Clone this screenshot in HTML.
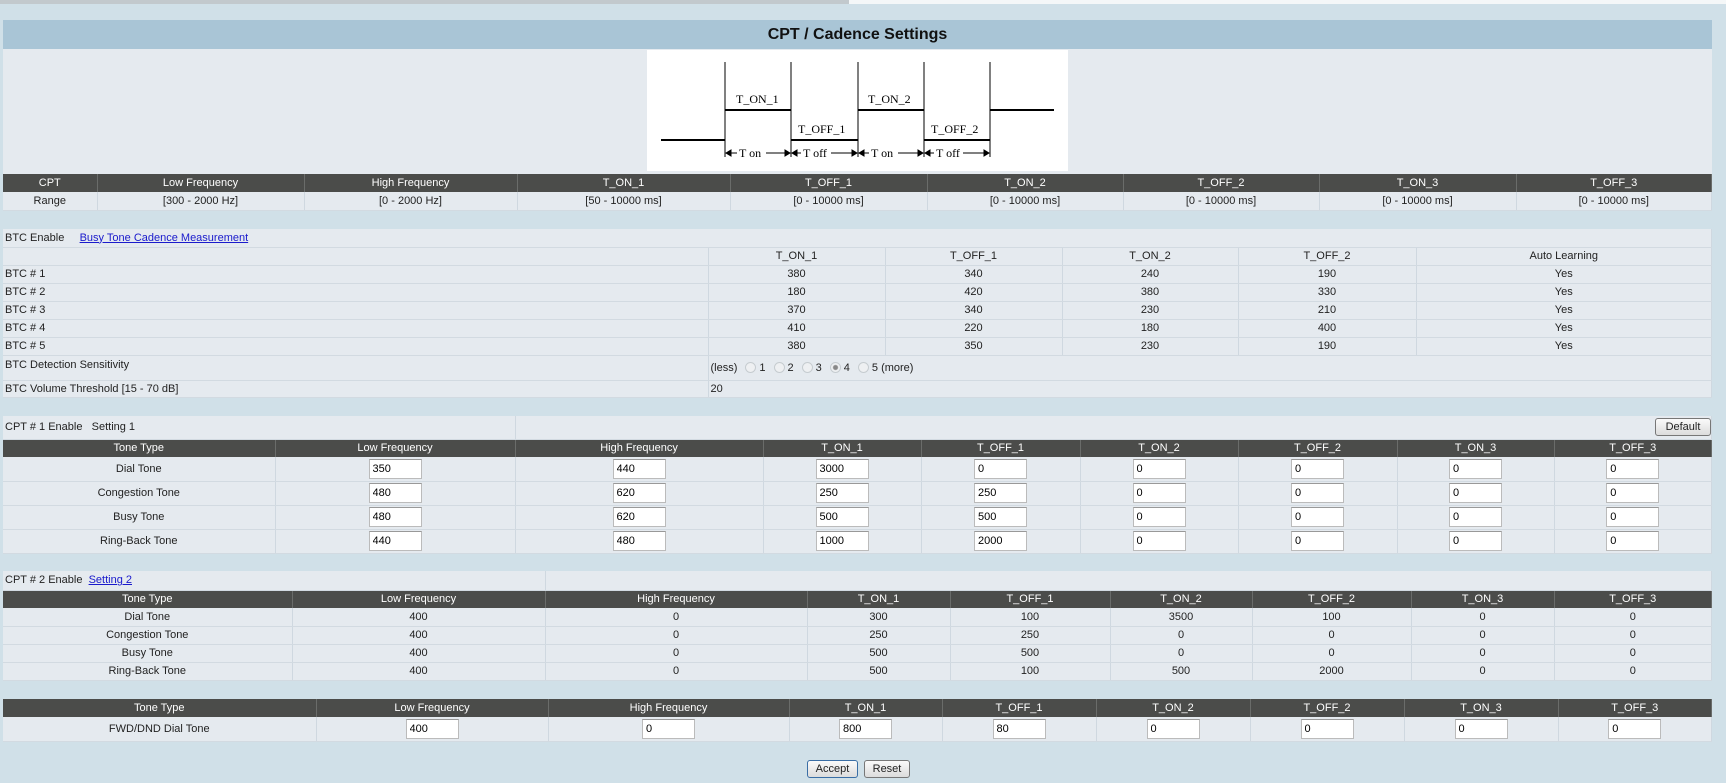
<!DOCTYPE html>
<html><head><meta charset="utf-8"><style>
*{box-sizing:border-box}
body{margin:0;width:1726px;height:783px;background:#d0e0e8;font-family:"Liberation Sans",Arial,sans-serif;font-size:11px;color:#222;position:relative;overflow:hidden}
.abs{position:absolute;left:3px;width:1709px}
table{border-collapse:collapse;table-layout:fixed;width:1709px}
td{padding:0;text-align:center;border-right:1px solid #cfd8e0;border-bottom:1px solid #d2dae1;background:#e5eaef;white-space:nowrap;overflow:hidden}
tr.h td{background:#4b4c4a;color:#fff;border-right:1px solid #6a6c6a;border-bottom:0}
td.l{text-align:left;padding-left:2px}
input.t{width:53px;height:20px;border:1px solid #bbb;border-top-color:#999;background:#fff;font:11px "Liberation Sans",Arial,sans-serif;padding:0 3px;vertical-align:middle}
a{color:#1a1acc}
.rad{display:inline-block;width:11px;height:11px;border-radius:50%;border:1px solid #c6ccd0;background:#eef0f2;vertical-align:-2px;margin:0 3px 0 8px}
.btn{position:absolute;height:18px;border:1px solid #777;border-radius:3px;background:linear-gradient(#fafafa,#dcdcdc);font-size:11px;text-align:center;line-height:16px}
</style></head><body>
<div style="position:absolute;left:0;top:0;width:849px;height:4px;background:#c2c9cd"></div>
<div style="position:absolute;left:849px;top:0;width:877px;height:4px;background:#f4f7f8"></div>

<div class="abs" style="top:20px;height:29px;background:#a9c5d6;text-align:center;font-weight:bold;font-size:16px;line-height:29px;color:#111">CPT / Cadence Settings</div>
<div class="abs" style="top:49px;height:125px;background:#e5eaef"></div>
<svg style="position:absolute;left:647px;top:50px" width="421" height="121" viewBox="0 0 421 121">
<rect width="421" height="121" fill="#fff"/>
<g stroke="#000" stroke-width="1">
<line x1="78" y1="12" x2="78" y2="107"/><line x1="144" y1="12" x2="144" y2="107"/><line x1="211" y1="12" x2="211" y2="107"/><line x1="277" y1="12" x2="277" y2="107"/><line x1="343" y1="12" x2="343" y2="107"/>
</g>
<g stroke="#000" stroke-width="2">
<line x1="14" y1="90" x2="78" y2="90"/><line x1="78" y1="60" x2="144" y2="60"/><line x1="144" y1="90" x2="211" y2="90"/><line x1="211" y1="60" x2="277" y2="60"/><line x1="277" y1="90" x2="343" y2="90"/><line x1="343" y1="60" x2="407" y2="60"/>
</g>
<g font-family="Liberation Serif,serif" font-size="12" fill="#000">
<text x="89" y="53">T_ON_1</text><text x="221" y="53">T_ON_2</text>
<text x="151" y="83">T_OFF_1</text><text x="284" y="83">T_OFF_2</text>
<text x="92" y="107">T on</text><text x="156" y="107">T off</text><text x="224" y="107">T on</text><text x="289" y="107">T off</text>
</g>
<g stroke="#000" stroke-width="1" fill="#000">
<line x1="79" y1="103" x2="90" y2="103"/><line x1="119" y1="103" x2="143" y2="103"/>
<line x1="145" y1="103" x2="154" y2="103"/><line x1="184" y1="103" x2="210" y2="103"/>
<line x1="212" y1="103" x2="222" y2="103"/><line x1="251" y1="103" x2="276" y2="103"/>
<line x1="278" y1="103" x2="287" y2="103"/><line x1="316" y1="103" x2="342" y2="103"/>
<path d="M79 103l5-3v6zM143 103l-5-3v6zM145 103l5-3v6zM210 103l-5-3v6zM212 103l5-3v6zM276 103l-5-3v6zM278 103l5-3v6zM342 103l-5-3v6z"/>
</g>
</svg>

<div class="abs" style="top:174px"><table>
<colgroup><col style="width:94px"><col style="width:207px"><col style="width:213px"><col style="width:213px"><col style="width:197px"><col style="width:196px"><col style="width:196px"><col style="width:197px"><col></colgroup>
<tr class="h" style="height:18px"><td>CPT</td><td>Low Frequency</td><td>High Frequency</td><td>T_ON_1</td><td>T_OFF_1</td><td>T_ON_2</td><td>T_OFF_2</td><td>T_ON_3</td><td>T_OFF_3</td></tr>
<tr style="height:18px"><td>Range</td><td>[300 - 2000 Hz]</td><td>[0 - 2000 Hz]</td><td>[50 - 10000 ms]</td><td>[0 - 10000 ms]</td><td>[0 - 10000 ms]</td><td>[0 - 10000 ms]</td><td>[0 - 10000 ms]</td><td>[0 - 10000 ms]</td></tr>
</table></div>

<div class="abs" style="top:229px"><table>
<colgroup><col style="width:705px"><col style="width:177px"><col style="width:177px"><col style="width:176px"><col style="width:178px"><col></colgroup>
<tr style="height:18px"><td class="l" colspan="6">BTC Enable &nbsp;&nbsp;&nbsp;&nbsp;<a href="#">Busy Tone Cadence Measurement</a></td></tr>
<tr style="height:18px"><td></td><td>T_ON_1</td><td>T_OFF_1</td><td>T_ON_2</td><td>T_OFF_2</td><td>Auto Learning</td></tr>
<tr style="height:18px"><td class="l">BTC # 1</td><td>380</td><td>340</td><td>240</td><td>190</td><td>Yes</td></tr>
<tr style="height:18px"><td class="l">BTC # 2</td><td>180</td><td>420</td><td>380</td><td>330</td><td>Yes</td></tr>
<tr style="height:18px"><td class="l">BTC # 3</td><td>370</td><td>340</td><td>230</td><td>210</td><td>Yes</td></tr>
<tr style="height:18px"><td class="l">BTC # 4</td><td>410</td><td>220</td><td>180</td><td>400</td><td>Yes</td></tr>
<tr style="height:18px"><td class="l">BTC # 5</td><td>380</td><td>350</td><td>230</td><td>190</td><td>Yes</td></tr>
<tr style="height:25px"><td class="l" style="vertical-align:top;padding-top:3px">BTC Detection Sensitivity</td><td class="l" colspan="5" style="padding-left:2px">(less)<span class="rad"></span>1<span class="rad"></span>2<span class="rad"></span>3<span class="rad" style="background:radial-gradient(circle,#888 0 2px,#eef0f2 3px)"></span>4<span class="rad"></span>5 (more)</td></tr>
<tr style="height:17px"><td class="l">BTC Volume Threshold [15 - 70 dB]</td><td class="l" colspan="5">20</td></tr>
</table></div>

<div class="abs" style="top:416px"><table>
<colgroup><col style="width:272px"><col style="width:240px"><col style="width:248px"><col style="width:158px"><col style="width:159px"><col style="width:158px"><col style="width:159px"><col style="width:157px"><col></colgroup>
<tr style="height:23px"><td class="l" colspan="2">CPT # 1 Enable &nbsp;&nbsp;Setting 1</td><td colspan="7" style="text-align:right;padding-right:0;position:relative"><span class="btn" style="position:relative;display:inline-block;width:56px;top:0">Default</span></td></tr>
<tr class="h" style="height:18px"><td>Tone Type</td><td>Low Frequency</td><td>High Frequency</td><td>T_ON_1</td><td>T_OFF_1</td><td>T_ON_2</td><td>T_OFF_2</td><td>T_ON_3</td><td>T_OFF_3</td></tr>
<tr style="height:24px"><td>Dial Tone</td><td><input class="t" value="350"></td><td><input class="t" value="440"></td><td><input class="t" value="3000"></td><td><input class="t" value="0"></td><td><input class="t" value="0"></td><td><input class="t" value="0"></td><td><input class="t" value="0"></td><td><input class="t" value="0"></td></tr>
<tr style="height:24px"><td>Congestion Tone</td><td><input class="t" value="480"></td><td><input class="t" value="620"></td><td><input class="t" value="250"></td><td><input class="t" value="250"></td><td><input class="t" value="0"></td><td><input class="t" value="0"></td><td><input class="t" value="0"></td><td><input class="t" value="0"></td></tr>
<tr style="height:24px"><td>Busy Tone</td><td><input class="t" value="480"></td><td><input class="t" value="620"></td><td><input class="t" value="500"></td><td><input class="t" value="500"></td><td><input class="t" value="0"></td><td><input class="t" value="0"></td><td><input class="t" value="0"></td><td><input class="t" value="0"></td></tr>
<tr style="height:24px"><td>Ring-Back Tone</td><td><input class="t" value="440"></td><td><input class="t" value="480"></td><td><input class="t" value="1000"></td><td><input class="t" value="2000"></td><td><input class="t" value="0"></td><td><input class="t" value="0"></td><td><input class="t" value="0"></td><td><input class="t" value="0"></td></tr>
</table></div>

<div class="abs" style="top:571px"><table>
<colgroup><col style="width:289px"><col style="width:253px"><col style="width:262px"><col style="width:143px"><col style="width:160px"><col style="width:142px"><col style="width:159px"><col style="width:143px"><col></colgroup>
<tr style="height:19px"><td class="l" colspan="2">CPT # 2 Enable &nbsp;<a href="#">Setting 2</a></td><td colspan="7"></td></tr>
<tr class="h" style="height:18px"><td>Tone Type</td><td>Low Frequency</td><td>High Frequency</td><td>T_ON_1</td><td>T_OFF_1</td><td>T_ON_2</td><td>T_OFF_2</td><td>T_ON_3</td><td>T_OFF_3</td></tr>
<tr style="height:18px"><td>Dial Tone</td><td>400</td><td>0</td><td>300</td><td>100</td><td>3500</td><td>100</td><td>0</td><td>0</td></tr>
<tr style="height:18px"><td>Congestion Tone</td><td>400</td><td>0</td><td>250</td><td>250</td><td>0</td><td>0</td><td>0</td><td>0</td></tr>
<tr style="height:18px"><td>Busy Tone</td><td>400</td><td>0</td><td>500</td><td>500</td><td>0</td><td>0</td><td>0</td><td>0</td></tr>
<tr style="height:18px"><td>Ring-Back Tone</td><td>400</td><td>0</td><td>500</td><td>100</td><td>500</td><td>2000</td><td>0</td><td>0</td></tr>
</table></div>

<div class="abs" style="top:699px"><table>
<colgroup><col style="width:313px"><col style="width:232px"><col style="width:241px"><col style="width:153px"><col style="width:154px"><col style="width:154px"><col style="width:154px"><col style="width:154px"><col></colgroup>
<tr class="h" style="height:18px"><td>Tone Type</td><td>Low Frequency</td><td>High Frequency</td><td>T_ON_1</td><td>T_OFF_1</td><td>T_ON_2</td><td>T_OFF_2</td><td>T_ON_3</td><td>T_OFF_3</td></tr>
<tr style="height:24px"><td>FWD/DND Dial Tone</td><td><input class="t" value="400"></td><td><input class="t" value="0"></td><td><input class="t" value="800"></td><td><input class="t" value="80"></td><td><input class="t" value="0"></td><td><input class="t" value="0"></td><td><input class="t" value="0"></td><td><input class="t" value="0"></td></tr>
</table></div>

<div class="btn" style="left:807px;top:760px;width:51px;border-color:#3a6ea5">Accept</div>
<div class="btn" style="left:864px;top:760px;width:46px">Reset</div>
</body></html>
